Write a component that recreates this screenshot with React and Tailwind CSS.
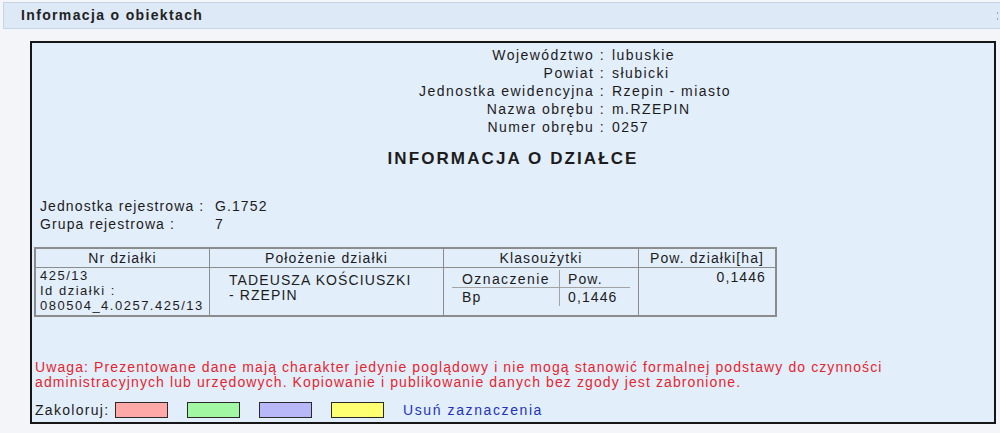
export default function App() {
  const font = { fontFamily: '"Liberation Sans", Arial, sans-serif' };
  const infoRows = [
    ["Województwo :", "lubuskie"],
    ["Powiat :", "słubicki"],
    ["Jednostka ewidencyjna :", "Rzepin - miasto"],
    ["Nazwa obrębu :", "m.RZEPIN"],
    ["Numer obrębu :", "0257"],
  ];
  return (
    <div className="w-[1000px] h-[433px] bg-[#f3f5f8] overflow-hidden text-[#1c1c1c]" style={font}>
      <div className="pt-[2px] pl-[3px]">
        <div className="relative h-[27px] bg-[#dde9f6] border-t border-l border-b border-[#c6d5e5] flex items-center pl-[17px]">
          <span className="text-[14px] font-bold tracking-[1.35px] text-[#222]">Informacja o obiektach</span>
          <div className="absolute right-[2px] top-[9px] flex flex-col gap-[4px]">
            <div className="w-[1px] h-[2px] bg-[#9aa6b4]" />
            <div className="w-[1px] h-[2px] bg-[#9aa6b4]" />
          </div>
        </div>
      </div>

      <div className="mt-[12px] ml-[30px] w-[966px] h-[383px] border-2 border-[#161616] bg-[#e3eefb] text-[14px] leading-[18px] tracking-[1.1px]">
        {/* info block */}
        <div className="pt-[3px] grid grid-cols-[573px_1fr] tracking-[1.45px]">
          {infoRows.map(([l, v]) => (
            <div key={l} className="contents">
              <div className="text-right">{l}</div>
              <div className="pl-[7px]">{v}</div>
            </div>
          ))}
        </div>

        <div className="mt-[13px] text-center text-[17px] leading-[20px] font-bold tracking-[2.1px]">
          INFORMACJA O DZIAŁCE
        </div>

        <div className="mt-[28px] pl-[8px] grid grid-cols-[175px_1fr]">
          <div>Jednostka rejestrowa :</div>
          <div>G.1752</div>
          <div>Grupa rejestrowa :</div>
          <div>7</div>
        </div>

        {/* table */}
        <div className="mt-[14px] ml-[2px] w-[743px] border-2 border-[#8c8c8c] grid grid-cols-[174px_234px_195px_136px] leading-[15px]">
          <div className="h-[19px] border-r border-b border-[#8c8c8c] flex items-center justify-center">Nr działki</div>
          <div className="h-[19px] border-r border-b border-[#8c8c8c] flex items-center justify-center">Położenie działki</div>
          <div className="h-[19px] border-r border-b border-[#8c8c8c] flex items-center justify-center">Klasoużytki</div>
          <div className="h-[19px] border-b border-[#8c8c8c] flex items-center justify-center">Pow. działki[ha]</div>

          <div className="h-[47px] border-r border-[#8c8c8c] pl-[4px] text-[13px] tracking-[1.5px]">
            425/13<br />Id działki :<br />080504_4.0257.425/13
          </div>
          <div className="h-[47px] border-r border-[#8c8c8c] pl-[19px] pt-[5px]">
            TADEUSZA KOŚCIUSZKI<br />- RZEPIN
          </div>
          <div className="h-[47px] border-r border-[#8c8c8c]">
            <div className="mt-[2px] ml-[8px] w-[178px] grid grid-cols-[108px_70px] leading-[18px]">
              <div className="h-[18px] border-r border-b border-[#a3a3a3] pl-[10px] tracking-[1.4px]">Oznaczenie</div>
              <div className="h-[18px] border-b border-[#a3a3a3] pl-[8px]">Pow.</div>
              <div className="h-[18px] border-r border-[#a3a3a3] pl-[10px]">Bp</div>
              <div className="h-[18px] pl-[8px]">0,1446</div>
            </div>
          </div>
          <div className="h-[47px] text-right pr-[9px] pt-[2px]">0,1446</div>
        </div>

        <div className="mt-[43px] pl-[3px] leading-[15px] text-[#e3262e]">
          Uwaga: Prezentowane dane mają charakter jedynie poglądowy i nie mogą stanowić formalnej podstawy do czynności
          <br />
          administracyjnych lub urzędowych. Kopiowanie i publikowanie danych bez zgody jest zabronione.
        </div>

        <div className="mt-[11px] pl-[3px] h-[18px] flex items-center">
          <div className="w-[80px] tracking-[1.3px]">Zakoloruj:</div>
          <div className="w-[53px] h-[16px] border border-[#2a2a2a] bg-[#ffa8a8]" />
          <div className="ml-[19px] w-[53px] h-[16px] border border-[#2a2a2a] bg-[#a2f7a2]" />
          <div className="ml-[19px] w-[53px] h-[16px] border border-[#2a2a2a] bg-[#b8b8f8]" />
          <div className="ml-[19px] w-[53px] h-[16px] border border-[#2a2a2a] bg-[#ffff72]" />
          <div className="ml-[19px] text-[#2233bb] tracking-[1.6px]">Usuń zaznaczenia</div>
        </div>
      </div>
    </div>
  );
}
